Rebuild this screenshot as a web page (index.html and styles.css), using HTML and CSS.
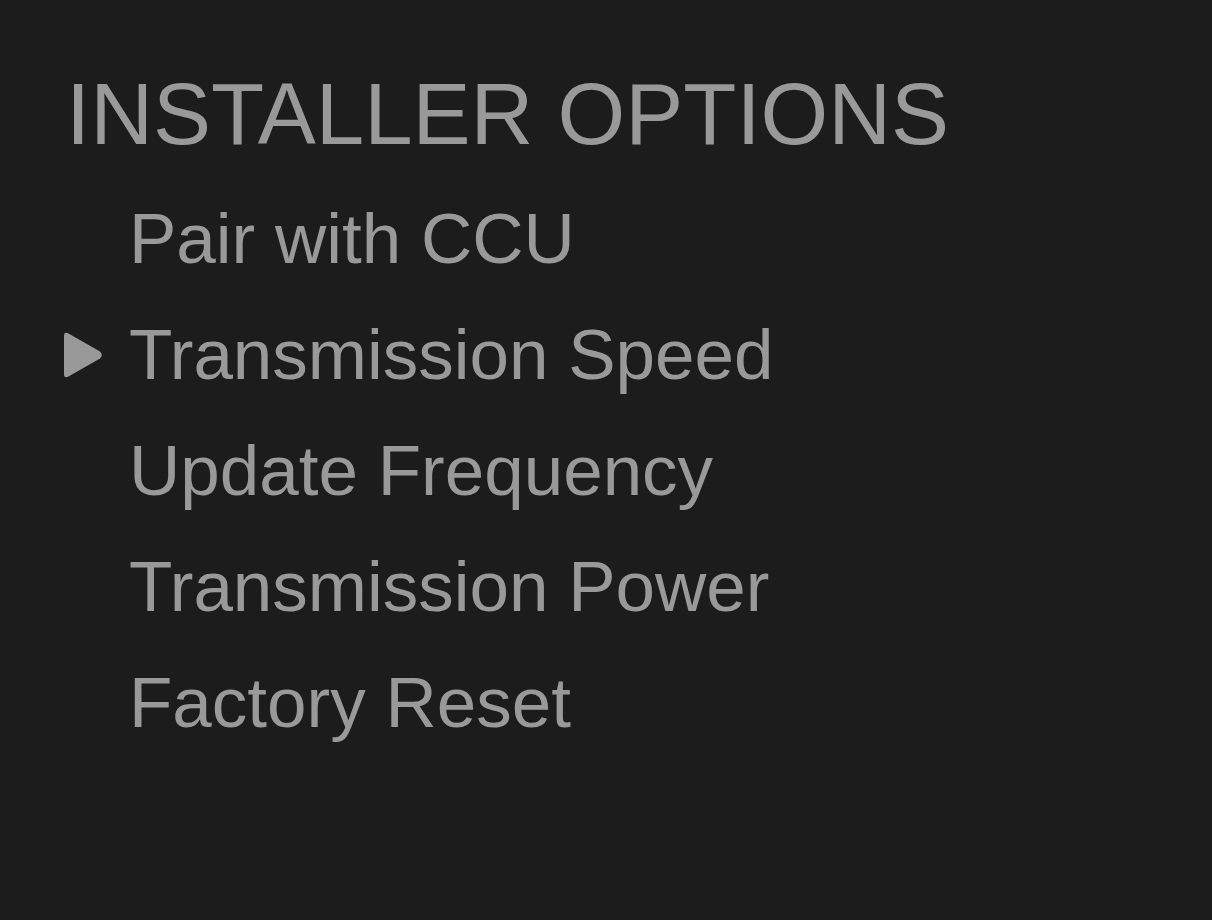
FILE: index.html
```html
<!DOCTYPE html>
<html lang="en">
<head>
    <meta charset="UTF-8">
    <meta name="viewport" content="width=device-width, initial-scale=1.0">
    <title>Installer Options</title>
    <link rel="stylesheet" href="styles.css">
</head>
<body>
    <div class="menu">
        <h1>INSTALLER OPTIONS</h1>
        <ul class="options">
            <li><span class="marker"></span><span>Pair with CCU</span></li>
            <li class="selected">
                <span class="marker">
                    <svg width="40" height="48" viewBox="0 0 40 48">
                        <path d="M0 5 Q0 0 4.5 2.5 L36 20.5 Q39.5 24 36 27.5 L4.5 45.5 Q0 48 0 43 Z" fill="#999999"/>
                    </svg>
                </span>
                <span>Transmission Speed</span>
            </li>
            <li><span class="marker"></span><span>Update Frequency</span></li>
            <li><span class="marker"></span><span>Transmission Power</span></li>
            <li><span class="marker"></span><span>Factory Reset</span></li>
        </ul>
    </div>
</body>
</html>
```

FILE: styles.css
```css
body{
    margin: 0;
    background-color: #1c1c1c;
    color: #999999;
    font-family: "Liberation Sans", Arial, sans-serif;
}
.menu{
    padding: 64px 0 0 64px;
}
.menu h1{
    margin: 0 0 0 2px;
    font-size: 87px;
    font-weight: normal;
    line-height: 100px;
}
.options{
    list-style: none;
    margin: 17px 0 0 0;
    padding: 0;
}
.options li{
    display: flex;
    align-items: center;
    font-size: 71px;
    line-height: 116px;
}
.marker{
    width: 65px;
    height: 48px;
    flex-shrink: 0;
}
.marker svg{
    display: block;
}
```
